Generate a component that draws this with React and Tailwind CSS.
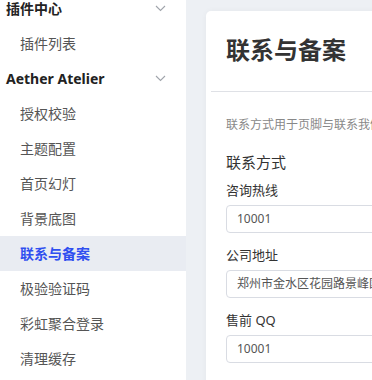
import React from "react";

const font = { fontFamily: '"Noto Sans", "Noto Sans CJK SC", sans-serif' };

function Chevron() {
  return (
    <svg width="11" height="7" viewBox="0 0 11 7" fill="none" className="mr-[20px]">
      <path d="M1 1 L5.5 5.5 L10 1" stroke="#a0a4ab" strokeWidth="1.1" />
    </svg>
  );
}

function Group({ label }) {
  return (
    <div className="h-[35px] flex items-center justify-between pl-[6px] text-[14px] font-bold text-[#222]">
      <span>{label}</span>
      <Chevron />
    </div>
  );
}

function Item({ label, active }) {
  return (
    <div
      className={
        "h-[35px] flex items-center pl-[20px] text-[14px] " +
        (active ? "bg-[#e9ecf2] text-[#2f4ff0] font-bold" : "text-[#555]")
      }
    >
      {label}
    </div>
  );
}

function Field({ label, value, first }) {
  return (
    <div className={first ? "" : "mt-[12px]"}>
      <div className="h-[20px] leading-[20px] text-[13px] text-[#333] mb-[5px]">{label}</div>
      <div className="h-[28px] w-[300px] border border-[#d9dce3] rounded-[4px] flex items-center pl-[10px] text-[12px] text-[#555] whitespace-nowrap overflow-hidden">
        {value}
      </div>
    </div>
  );
}

export default function App() {
  return (
    <div className="w-[372px] h-[380px] flex overflow-hidden" style={font}>
      <div className="w-[186px] shrink-0 bg-white overflow-hidden">
        <div className="mt-[-9px]">
          <Group label="插件中心" />
          <Item label="插件列表" />
          <Group label="Aether Atelier" />
          <Item label="授权校验" />
          <Item label="主题配置" />
          <Item label="首页幻灯" />
          <Item label="背景底图" />
          <Item label="联系与备案" active />
          <Item label="极验验证码" />
          <Item label="彩虹聚合登录" />
          <Item label="清理缓存" />
        </div>
      </div>
      <div className="flex-1 bg-[#edf0f4] pt-[11px] pl-[20px] overflow-hidden">
        <div className="w-[400px] h-[420px] bg-white rounded-[5px] shadow-[0_0_6px_rgba(0,0,0,0.04)] px-[5px]">
          <div className="h-[80px] flex items-center pl-[15px] pb-[2px] text-[24px] font-bold text-[#333]">
            联系与备案
          </div>
          <div className="h-px bg-[#dfe1e6]" />
          <div className="pl-[15px] pt-[23px]">
            <div className="h-[20px] leading-[20px] text-[12px] text-[#888] whitespace-nowrap">
              联系方式用于页脚与联系我们页面展示
            </div>
            <div className="mt-[17px] h-[20px] leading-[20px] text-[15px] text-[#333]">联系方式</div>
            <div className="mt-[8px]">
              <Field label="咨询热线" value="10001" first />
              <Field label="公司地址" value="郑州市金水区花园路景峰国际" />
              <Field label="售前 QQ" value="10001" />
            </div>
          </div>
        </div>
      </div>
    </div>
  );
}
